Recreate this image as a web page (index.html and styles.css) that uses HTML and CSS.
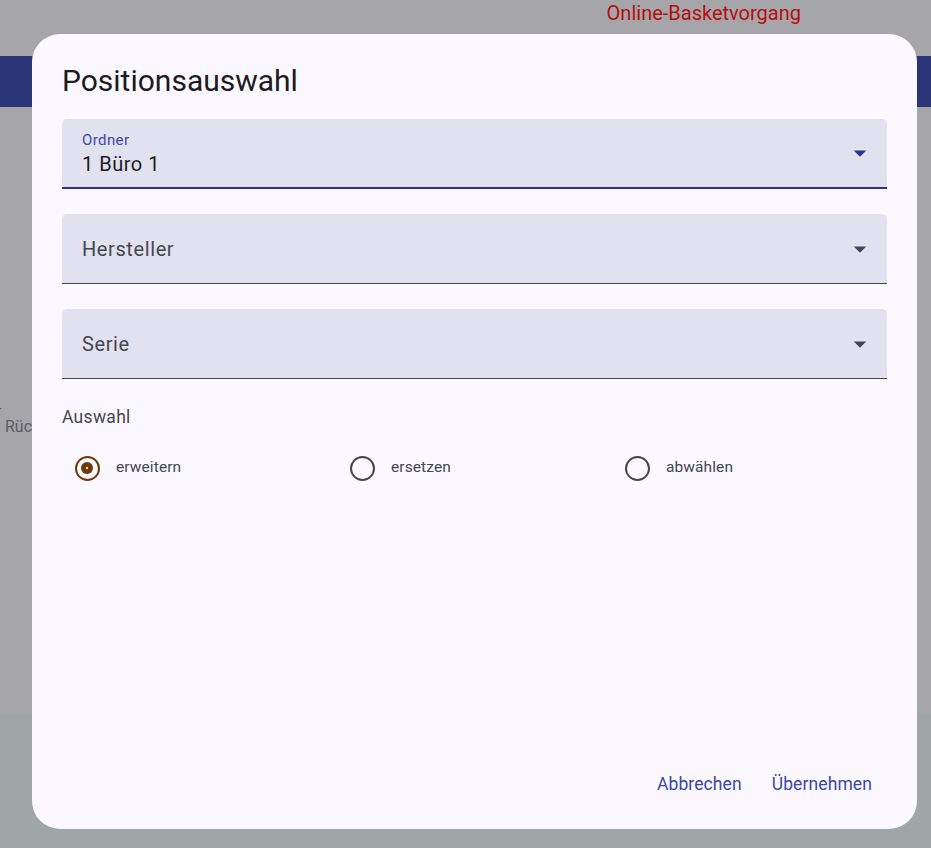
FILE: index.html
```html
<!DOCTYPE html>
<html lang="de">
<head>
  <meta charset="UTF-8" />
  <meta name="viewport" content="width=device-width, initial-scale=1.0"/>
  <title>Positionsauswahl</title>
  <link rel="stylesheet" href="styles.css">
</head>
<body>
  <div class="page">
    <div class="topbar">
      <span class="shop-title">Online-Basketvorgang</span>
    </div>
    <div class="navbar"></div>
    <div class="main">
      <div class="dash">-</div>
      <div class="back-link">Rückgabe</div>
    </div>
    <div class="footer"></div>
  </div>

  <div class="dialog">
    <h1 class="dialog-title">Positionsauswahl</h1>

    <div class="field focused">
      <div class="field-text">
        <span class="field-label">Ordner</span>
        <span class="field-value">1 Büro 1</span>
      </div>
      <svg class="arrow" viewBox="0 0 24 24"><path d="M7 10l5 5 5-5z"/></svg>
    </div>

    <div class="field">
      <div class="field-text">
        <span class="field-placeholder">Hersteller</span>
      </div>
      <svg class="arrow" viewBox="0 0 24 24"><path d="M7 10l5 5 5-5z"/></svg>
    </div>

    <div class="field">
      <div class="field-text">
        <span class="field-placeholder">Serie</span>
      </div>
      <svg class="arrow" viewBox="0 0 24 24"><path d="M7 10l5 5 5-5z"/></svg>
    </div>

    <div class="group-label">Auswahl</div>
    <div class="radio-row">
      <label class="radio checked">
        <span class="radio-box"><span class="ring"><span class="dot"></span></span></span>
        <span class="radio-text">erweitern</span>
      </label>
      <label class="radio">
        <span class="radio-box"><span class="ring"></span></span>
        <span class="radio-text">ersetzen</span>
      </label>
      <label class="radio">
        <span class="radio-box"><span class="ring"></span></span>
        <span class="radio-text">abwählen</span>
      </label>
    </div>

    <div class="actions">
      <button class="text-btn">Abbrechen</button>
      <button class="text-btn">Übernehmen</button>
    </div>
  </div>
</body>
</html>
```

FILE: styles.css
```css
body {
  margin: 0;
  font-family: Roboto, "Liberation Sans", sans-serif;
  background: #a6a5aa;
  overflow: hidden;
}
.page {
  height: 848px;
  display: flex;
  flex-direction: column;
}
.topbar {
  height: 56px;
  display: flex;
  justify-content: flex-end;
  padding-right: 130px;
}
.shop-title {
  color: #b30f0f;
  font-size: 20px;
  line-height: 27px;
}
.navbar {
  height: 51px;
  background: #2b3679;
}
.main {
  flex: 1;
  padding-top: 294px;
  color: #5e5d63;
  font-size: 16px;
}
.dash {
  line-height: 16px;
  margin-left: -3px;
}
.back-link {
  margin-left: 5px;
  line-height: 20px;
}
.footer {
  height: 135px;
  background: #9ea6a8;
}

.dialog {
  position: absolute;
  left: 32px;
  top: 34px;
  width: 885px;
  height: 795px;
  box-sizing: border-box;
  padding: 29px 30px 20px;
  background: #fbf8ff;
  border-radius: 28px;
  display: flex;
  flex-direction: column;
}
.dialog-title {
  margin: 0 0 20px;
  font-size: 30px;
  font-weight: 400;
  line-height: 36px;
  color: #1b1b21;
}
.field {
  height: 70px;
  box-sizing: border-box;
  margin-bottom: 25px;
  padding: 0 12px 0 20px;
  background: #e1e1ef;
  border-radius: 5px 5px 0 0;
  border-bottom: 1px solid #46464f;
  display: flex;
  align-items: center;
}
.field.focused {
  border-bottom: 2px solid #283593;
}
.field-text {
  flex: 1;
  display: flex;
  flex-direction: column;
}
.field-label {
  font-size: 15px;
  line-height: 20px;
  letter-spacing: 0.4px;
  color: #3949ab;
  margin-top: 2px;
}
.field-value {
  font-size: 20px;
  line-height: 28px;
  letter-spacing: 0.5px;
  color: #1b1b21;
}
.field-placeholder {
  font-size: 20px;
  line-height: 28px;
  letter-spacing: 0.6px;
  color: #46464f;
}
.arrow {
  width: 30px;
  height: 30px;
  fill: #46464f;
}
.focused .arrow {
  fill: #283593;
}
.group-label {
  margin-top: 1px;
  font-size: 17.5px;
  line-height: 24px;
  letter-spacing: 0.3px;
  color: #46464f;
}
.radio-row {
  display: grid;
  grid-template-columns: repeat(3, 1fr);
  margin-top: 14px;
}
.radio {
  display: flex;
  align-items: center;
  gap: 4px;
}
.radio-box {
  width: 50px;
  height: 50px;
  display: flex;
  align-items: center;
  justify-content: center;
}
.ring {
  width: 25px;
  height: 25px;
  box-sizing: border-box;
  border: 2.5px solid #46464f;
  border-radius: 50%;
  display: flex;
  align-items: center;
  justify-content: center;
}
.checked .ring {
  border-color: #6e3a08;
}
.dot {
  width: 12.5px;
  height: 12.5px;
  border-radius: 50%;
  background: radial-gradient(circle, #f3d9b8 0 1.2px, #6e3a08 1.6px);
}
.radio-text {
  font-size: 15.5px;
  letter-spacing: 0.1px;
  color: #46464f;
  margin-top: -3px;
}
.actions {
  margin-top: auto;
  display: flex;
  justify-content: flex-end;
}
.text-btn {
  height: 50px;
  padding: 0 15px;
  border: none;
  background: none;
  font-family: inherit;
  font-size: 17.5px;
  letter-spacing: 0.1px;
  color: #3a47a6;
  cursor: pointer;
  margin-top: 2px;
}
```
